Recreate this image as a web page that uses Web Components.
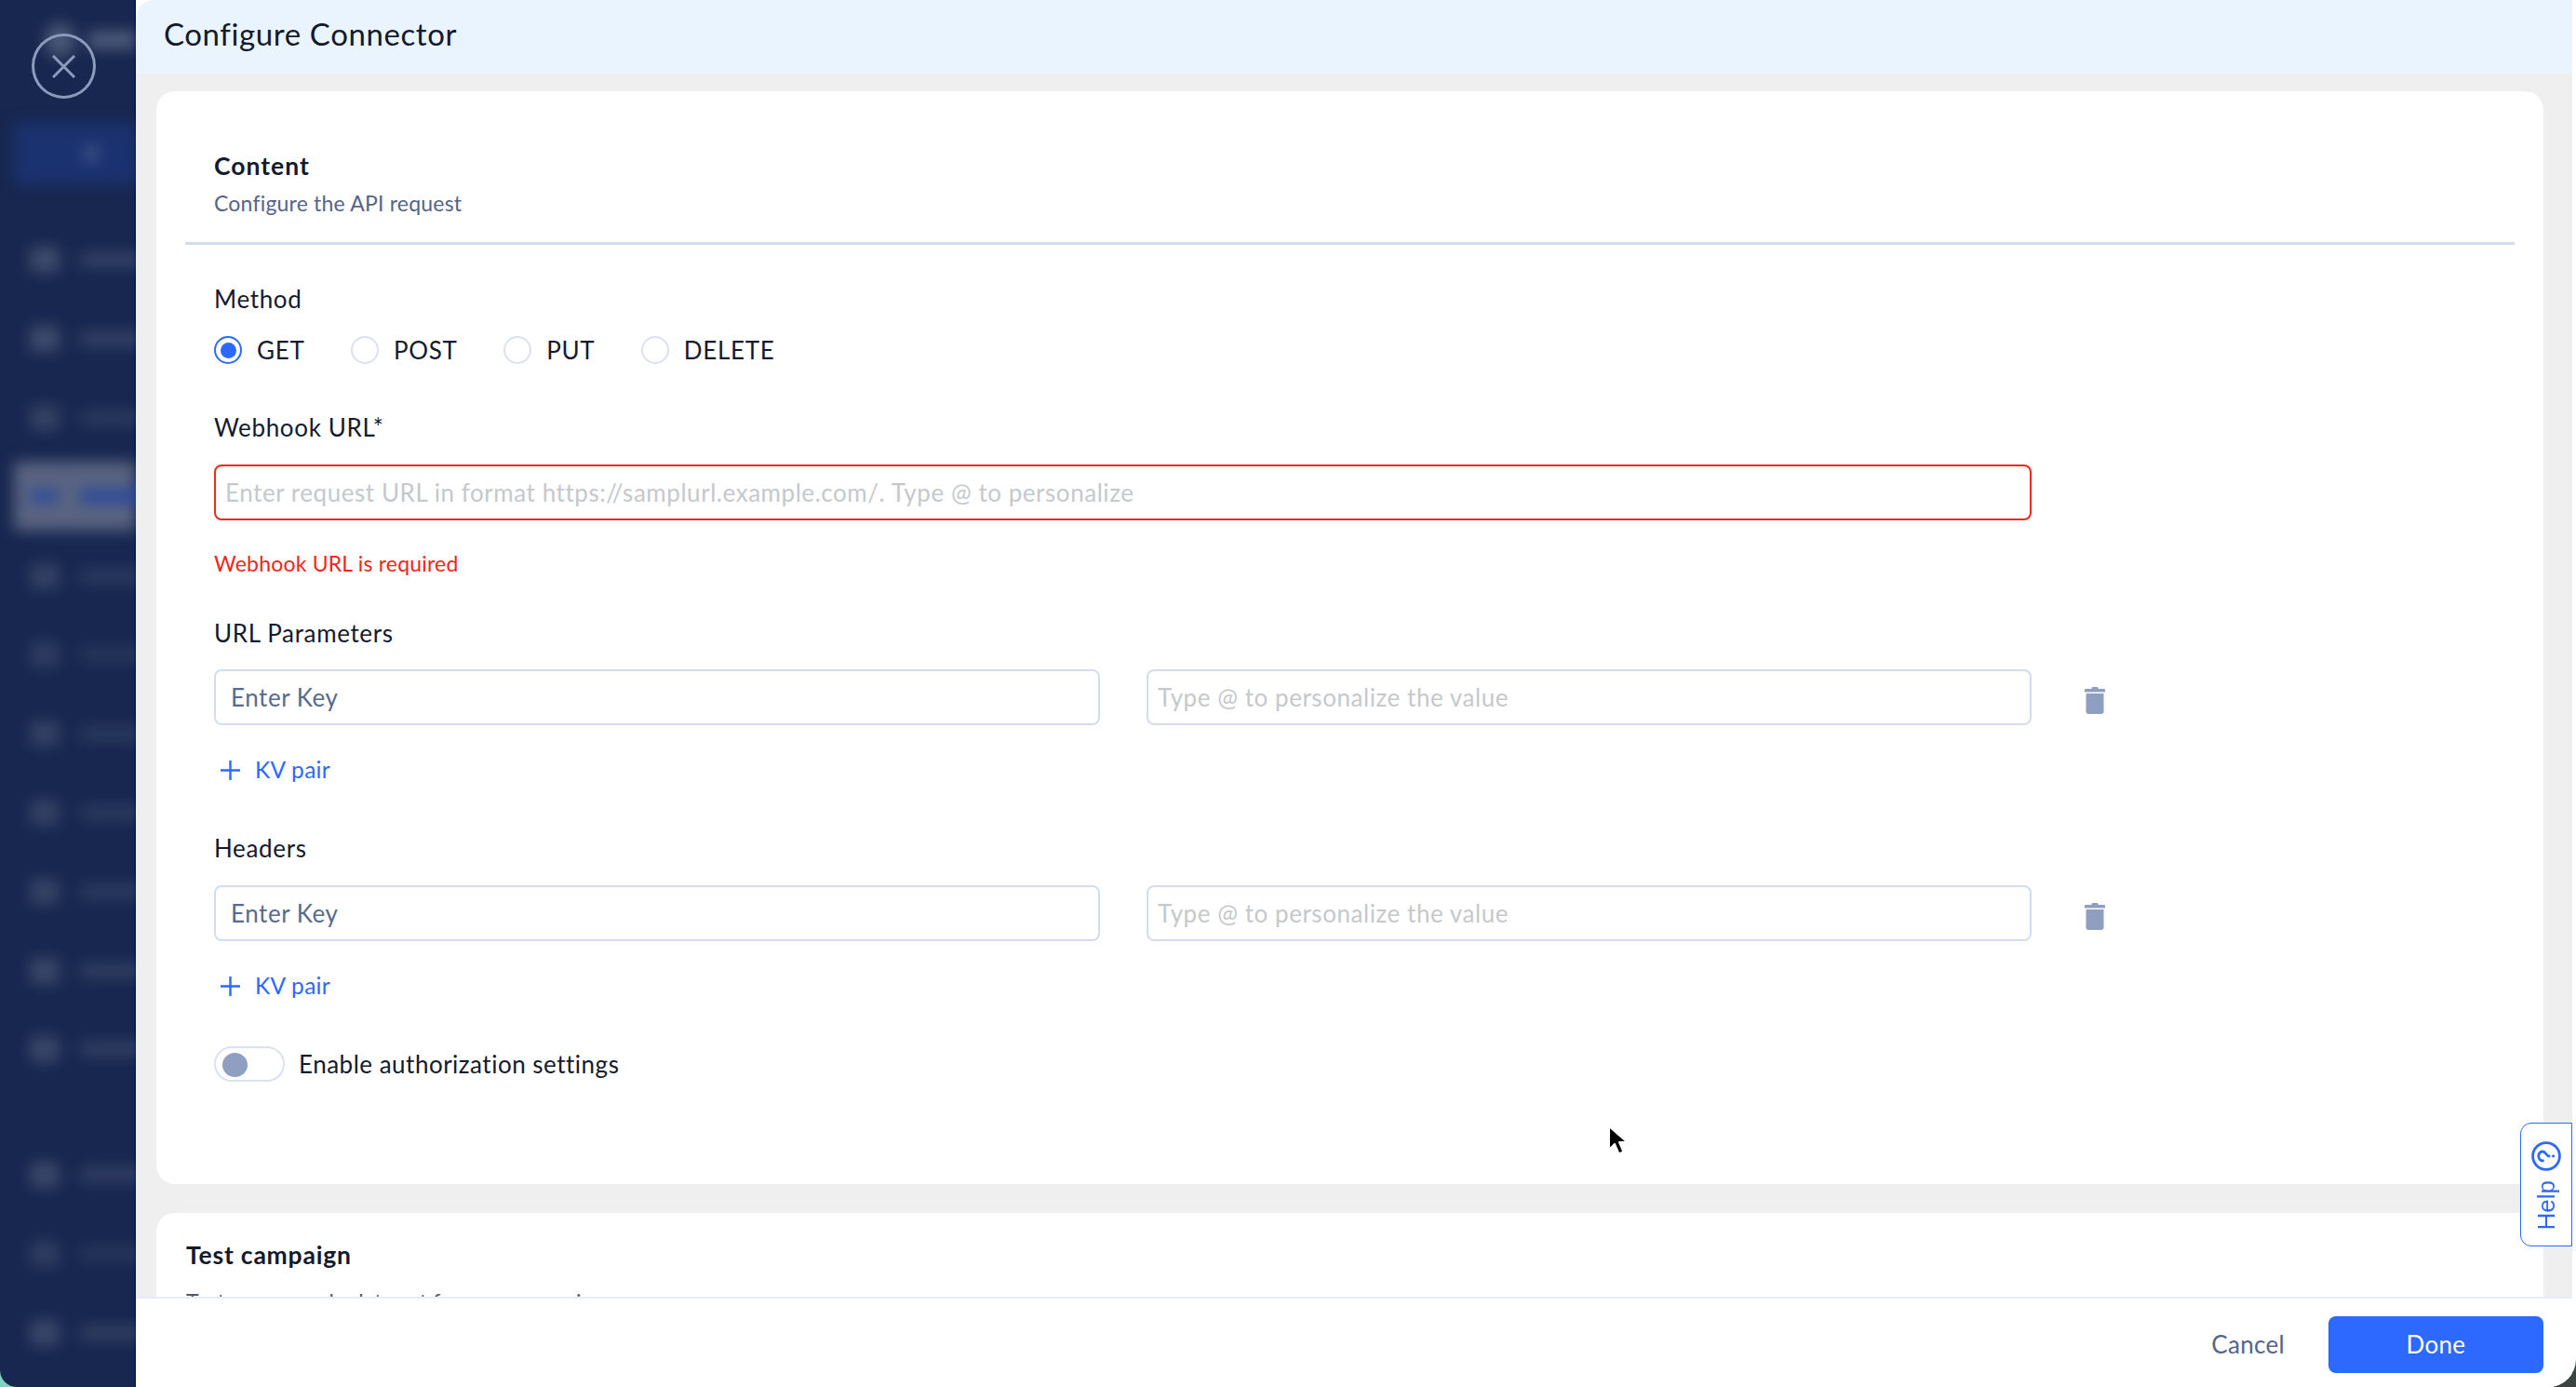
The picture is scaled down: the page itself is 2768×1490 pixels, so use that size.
<!DOCTYPE html>
<html lang="en">
<head>
<meta charset="utf-8">
<title>Configure Connector</title>
<style>
  html, body { margin: 0; height: 100%; background: #fff; overflow: hidden; }
  body { font-family: Lato, "Liberation Sans", sans-serif; }
</style>
</head>
<body>
<app-shell>
  <blur-sidebar slot="side"></blur-sidebar>
  <connector-modal slot="main" title="Configure Connector">
    <form-card>
      <card-head slot="head" title="Content" sub="Configure the API request"></card-head>
      <field-label style="margin-top:43px">Method</field-label>
      <method-radios style="margin-top:25px"></method-radios>
      <field-label style="margin-top:53px">Webhook URL*</field-label>
      <text-field style="margin-top:25px;width:1953px" error pad="12" muted>Enter request URL in format https://samplurl.example.com/. Type @ to personalize</text-field>
      <error-text style="margin-top:31px">Webhook URL is required</error-text>
      <field-label style="margin-top:45px">URL Parameters</field-label>
      <kv-row style="margin-top:24px"></kv-row>
      <add-link style="margin-top:33px">KV pair</add-link>
      <field-label style="margin-top:54px">Headers</field-label>
      <kv-row style="margin-top:25px"></kv-row>
      <add-link style="margin-top:33px">KV pair</add-link>
      <toggle-switch style="margin-top:50px">Enable authorization settings</toggle-switch>
    </form-card>
    <test-card></test-card>
  </connector-modal>
</app-shell>

<script>
/**
 * small helper, every element renders its html into an open shadow root
 */
class BaseElement extends HTMLElement {
  constructor() {
    super();
    this.attachShadow({ mode: "open" });
  }
  connectedCallback() {
    this.shadowRoot.innerHTML = this.html;
  }
}

/**
 * `app-shell`
 * window with rounded bottom corners, sidebar plus the modal, and overlays
 */
class AppShell extends BaseElement {
  get html() {
    return `
    <style>
      :host {
        display: block;
        width: 100vw;
        height: 100vh;
        background: linear-gradient(90deg, #7fd3c2 0 50%, #3a4440 50% 100%);
        position: relative;
      }
      .window {
        display: flex;
        height: 100%;
        background: #fff;
        border-radius: 0 0 30px 18px;
        overflow: hidden;
      }
      .main { display: flex; flex: 1; min-width: 0; padding-right: 4px; }
      ::slotted([slot="side"]) { flex: 0 0 146px; }
      ::slotted([slot="main"]) { flex: 1; min-width: 0; }
    </style>
    <div class="window">
      <slot name="side"></slot>
      <div class="main"><slot name="main"></slot></div>
    </div>
    <close-button></close-button>
    <help-tab></help-tab>
    <mouse-cursor></mouse-cursor>`;
  }
}

/**
 * `blur-sidebar`
 * the app navigation seen blurred behind the modal, no readable text
 */
class BlurSidebar extends BaseElement {
  get html() {
    const row = (w, o = 0.17) => `
      <div class="row">
        <i class="ico" style="opacity:${o}"></i>
        <i class="txt" style="width:${w}px;opacity:${o * 0.75}"></i>
      </div>`;
    return `
    <style>
      :host {
        display: block;
        background: #17274f;
        overflow: hidden;
        box-shadow: inset -2px 0 0 #0d1c4b;
      }
      .inner { filter: blur(8px); height: 100%; }
      .top { display: flex; align-items: center; height: 86px; padding-left: 48px; gap: 14px; }
      .avatar { width: 38px; height: 38px; border-radius: 50%; background: #fff; opacity: .22; }
      .name { width: 60px; height: 18px; background: #fff; opacity: .26; }
      .create {
        margin: 46px 0 0 15px;
        height: 66px;
        background: #1b3270;
        display: flex;
        align-items: center;
        padding-left: 75px;
      }
      .create i { width: 16px; height: 16px; border-radius: 50%; background: #fff; opacity: .2; }
      .list { margin-top: 39px; }
      .row { display: flex; align-items: center; height: 84.8px; padding-left: 32px; gap: 22px; }
      .ico { flex: 0 0 32px; height: 28px; background: #fff; border-radius: 5px; }
      .txt { height: 16px; background: #fff; flex: none; }
      .active {
        margin: 0 0 0 15px;
        padding-left: 17px;
        height: 74px;
        margin-top: 5px;
        margin-bottom: 5.8px;
        background: #5a6480;
      }
      .active .ico, .active .txt { background: #2c4a9c; opacity: 1; }
      .active .ico { height: 14px; }
      .more { margin-top: 50px; }
    </style>
    <div class="inner">
      <div class="top"><i class="avatar"></i><i class="name"></i></div>
      <div class="create"><i></i></div>
      <div class="list">
        ${row(70)}${row(70)}${row(70, 0.12)}
        <div class="row active"><i class="ico"></i><i class="txt" style="width:70px"></i></div>
        ${row(70, 0.12)}${row(70, 0.1)}${row(70, 0.12)}${row(70, 0.12)}${row(70, 0.13)}${row(70, 0.15)}${row(70, 0.15)}
      </div>
      <div class="more">${row(70, 0.15)}${row(70, 0.1)}${row(70, 0.15)}</div>
    </div>`;
  }
}

/**
 * `connector-modal`
 * header, scrolling grey body and the footer buttons
 */
class ConnectorModal extends BaseElement {
  get html() {
    return `
    <style>
      :host {
        display: flex;
        flex-direction: column;
        height: 100%;
        background: #fff;
        border-radius: 20px 0 0 8px;
        overflow: hidden;
        color: #141a2e;
      }
      header {
        flex: 0 0 79px;
        display: flex;
        align-items: center;
        padding: 0 0 7px 30px;
        box-sizing: border-box;
        background: #e9f4ff;
        font-size: 33px;
        letter-spacing: .6px;
      }
      .body {
        flex: 1;
        min-height: 0;
        overflow: hidden;
        background: #efefef;
        padding: 19px 31px 0 22px;
      }
      footer {
        flex: 0 0 97px;
        box-sizing: border-box;
        border-top: 2px solid #e6edf9;
        display: flex;
        justify-content: flex-end;
        align-items: flex-start;
        gap: 47px;
        padding: 19px 31px 0 0;
        background: #fff;
      }
      .cancel { font-size: 26px; letter-spacing: .3px; color: #55648a; line-height: 61px; }
      .done {
        width: 231px;
        height: 61px;
        line-height: 61px;
        border-radius: 8px;
        background: #2d68ff;
        color: #fff;
        text-align: center;
        font-size: 26px;
        letter-spacing: .3px;
      }
    </style>
    <header>${this.getAttribute("title")}</header>
    <div class="body"><slot></slot></div>
    <footer>
      <div class="cancel">Cancel</div>
      <div class="done">Done</div>
    </footer>`;
  }
}

class FormCard extends BaseElement {
  get html() {
    return `
    <style>
      :host {
        display: block;
        background: #fff;
        border-radius: 20px;
        padding: 65px 31px 110px;
      }
      .fields { padding-left: 31px; }
    </style>
    <slot name="head"></slot>
    <div class="fields"><slot></slot></div>`;
  }
}

class CardHead extends BaseElement {
  get html() {
    return `
    <style>
      :host { display: block; }
      .title, .sub { line-height: 30px; padding-left: 31px; }
      .title { font-size: 26.5px; letter-spacing: 1px; font-weight: 700; }
      .sub { margin-top: 10px; font-size: 23px; letter-spacing: .2px; color: #55648a; }
      .line { margin-top: 27px; height: 3px; background: #d5dceb; }
    </style>
    <div class="title">${this.getAttribute("title")}</div>
    <div class="sub">${this.getAttribute("sub")}</div>
    <div class="line"></div>`;
  }
}

class FieldLabel extends BaseElement {
  get html() {
    return `
    <style>
      :host { display: block; font-size: 26px; letter-spacing: .65px; line-height: 30px; color: #141a2e; }
    </style>
    <slot></slot>`;
  }
}

class ErrorText extends BaseElement {
  get html() {
    return `
    <style>
      :host { display: block; font-size: 23px; letter-spacing: .2px; line-height: 30px; color: #f0261c; }
    </style>
    <slot></slot>`;
  }
}

/**
 * `method-radios`
 * GET is the selected one
 */
class MethodRadios extends BaseElement {
  get html() {
    const item = (name, on) => `
      <div class="item"><span class="dot ${on ? "on" : ""}"></span>${name}</div>`;
    return `
    <style>
      :host { display: flex; gap: 49.5px; font-size: 26px; letter-spacing: .7px; line-height: 30px; color: #141a2e; }
      .item { display: flex; align-items: center; gap: 16px; }
      .dot {
        box-sizing: border-box;
        width: 30px;
        height: 30px;
        border-radius: 50%;
        border: 2px solid #dbe1ef;
        display: flex;
        align-items: center;
        justify-content: center;
      }
      .on { border-color: #2d68ff; }
      .on::after {
        content: "";
        width: 17px;
        height: 17px;
        border-radius: 50%;
        background: #2d68ff;
      }
    </style>
    ${item("GET", true)}${item("POST")}${item("PUT")}${item("DELETE")}`;
  }
}

/**
 * `text-field`
 * attributes: error (red border), muted (placeholder grey), pad (left padding)
 */
class TextField extends BaseElement {
  get html() {
    const pad = this.getAttribute("pad") || 18;
    const color = this.hasAttribute("muted") ? "#c6c8cc" : "#5a6a8e";
    const border = this.hasAttribute("error") ? "#ee2a1d" : "#d5dceb";
    return `
    <style>
      :host {
        display: block;
        box-sizing: border-box;
        height: 60px;
        border: 2px solid ${border};
        border-radius: 8px;
        padding: 0 ${pad - 2}px;
        line-height: 56px;
        font-size: 26px;
        letter-spacing: .55px;
        color: ${color};
        white-space: nowrap;
        background: #fff;
      }
    </style>
    <slot></slot>`;
  }
}

/**
 * `kv-row`
 * key and value inputs with the delete icon beside them
 */
class KvRow extends BaseElement {
  get html() {
    return `
    <style>
      :host { display: flex; align-items: center; }
      text-field { flex: none; }
      .key { width: 952px; }
      .val { width: 951px; margin-left: 50px; }
      trash-icon { margin: 6px 0 0 57px; }
    </style>
    <text-field class="key">Enter Key</text-field>
    <text-field class="val" muted pad="12">Type @ to personalize the value</text-field>
    <trash-icon></trash-icon>`;
  }
}

class TrashIcon extends BaseElement {
  get html() {
    return `
    <style>
      :host { display: block; width: 22px; height: 29px; }
      svg { display: block; }
    </style>
    <svg width="22" height="29" viewBox="0 0 22 29" fill="#8e9fc2">
      <path d="M7.5 1.5C7.5.6 8.2 0 9 0h4c.8 0 1.5.6 1.5 1.5V2H21c.6 0 1 .4 1 1v2.4H0V3c0-.6.4-1 1-1h6.500z"/>
      <path d="M1.500 7h19v19.500c0 1.400-1.100 2.500-2.500 2.500H4c-1.400 0-2.500-1.100-2.500-2.500z"/>
    </svg>`;
  }
}

class AddLink extends BaseElement {
  get html() {
    return `
    <style>
      :host {
        display: flex;
        align-items: center;
        font-size: 24.5px;
        letter-spacing: .3px;
        line-height: 30px;
        color: #2d68ff;
        padding-left: 7px;
      }
      svg { margin-right: 16px; }
    </style>
    <svg width="21" height="21" viewBox="0 0 21 21" fill="none" stroke="#2d68ff" stroke-width="2.400">
      <path d="M10.500 0v21M0 10.500h21"/>
    </svg>
    <slot></slot>`;
  }
}

class ToggleSwitch extends BaseElement {
  get html() {
    return `
    <style>
      :host {
        display: flex;
        align-items: center;
        gap: 15px;
        font-size: 26px;
        letter-spacing: .5px;
        color: #141a2e;
      }
      .track {
        box-sizing: border-box;
        width: 76px;
        height: 38px;
        border: 2px solid #dbe1ef;
        border-radius: 19px;
        padding: 5px 7px;
      }
      .knob { width: 27px; height: 26px; border-radius: 50%; background: #8e9fc2; }
    </style>
    <div class="track"><div class="knob"></div></div>
    <slot></slot>`;
  }
}

class TestCard extends BaseElement {
  get html() {
    return `
    <style>
      :host {
        display: block;
        margin-top: 31px;
        background: #fff;
        border-radius: 20px 20px 0 0;
        padding: 30px 32px 40px;
      }
      .title { font-size: 26.5px; letter-spacing: .8px; font-weight: 700; line-height: 30px; color: #141a2e; }
      .sub { margin-top: 20px; font-size: 23px; letter-spacing: .2px; line-height: 30px; color: #555a66; }
    </style>
    <div class="title">Test campaign</div>
    <div class="sub">Test your sample data set for your campaign</div>`;
  }
}

class CloseButton extends BaseElement {
  get html() {
    return `
    <style>
      :host {
        position: absolute;
        left: 34px;
        top: 36px;
        width: 69px;
        height: 70px;
        box-sizing: border-box;
        border: 3px solid #8b9bbd;
        border-radius: 50%;
        display: flex;
        align-items: center;
        justify-content: center;
      }
      svg { display: block; }
    </style>
    <svg width="25" height="25" viewBox="0 0 25 25" fill="none" stroke="#8b9bbd" stroke-width="3">
      <path d="M1 1l23 23M24 1L1 24"/>
    </svg>`;
  }
}

/**
 * `help-tab`
 * feedback tab stuck on the right edge, everything turned a quarter
 */
class HelpTab extends BaseElement {
  get html() {
    return `
    <style>
      :host {
        position: absolute;
        left: 2708px;
        top: 1206px;
        width: 56px;
        height: 133px;
        box-sizing: border-box;
        border: 1.500px solid #2d68ff;
        border-radius: 12px 0 0 12px;
        background: #fff;
        display: flex;
        flex-direction: column;
        align-items: center;
        padding: 19px 0 0 0;
        font-family: "Liberation Sans", Arial, sans-serif;
        font-size: 26px;
        color: #2d68ff;
      }
      svg { display: block; flex: none; }
      .txt {
        writing-mode: vertical-rl;
        transform: rotate(180deg);
        line-height: 30px;
        margin: 10px 0 0 0;
      }
    </style>
    <svg width="32" height="32" viewBox="0 0 32 32" fill="none" stroke="#2d68ff" stroke-width="2.800" stroke-linecap="round">
      <circle cx="16" cy="16" r="14.400"/>
      <g transform="rotate(-90 16 16)">
        <path d="M11 12.500c0-3 2.200-4.700 5-4.700s5 1.700 5 4.300c0 3.600-5 3.600-5 7"/>
        <path d="M16 23.500v.2"/>
      </g>
    </svg>
    <div class="txt">Help</div>`;
  }
}

class MouseCursor extends BaseElement {
  get html() {
    return `
    <style>
      :host { position: absolute; left: 1726px; top: 1207px; width: 24px; height: 36px; }
      svg { display: block; }
    </style>
    <svg width="24" height="36" viewBox="0 0 24 36">
      <path d="M3 3v25l6-6 4.500 10.500 5-2L14 20h8.500z" fill="#000" stroke="#fff" stroke-width="2" stroke-linejoin="round"/>
    </svg>`;
  }
}

customElements.define("app-shell", AppShell);
customElements.define("blur-sidebar", BlurSidebar);
customElements.define("connector-modal", ConnectorModal);
customElements.define("form-card", FormCard);
customElements.define("card-head", CardHead);
customElements.define("field-label", FieldLabel);
customElements.define("error-text", ErrorText);
customElements.define("method-radios", MethodRadios);
customElements.define("text-field", TextField);
customElements.define("kv-row", KvRow);
customElements.define("trash-icon", TrashIcon);
customElements.define("add-link", AddLink);
customElements.define("toggle-switch", ToggleSwitch);
customElements.define("test-card", TestCard);
customElements.define("close-button", CloseButton);
customElements.define("help-tab", HelpTab);
customElements.define("mouse-cursor", MouseCursor);
</script>
</body>
</html>
